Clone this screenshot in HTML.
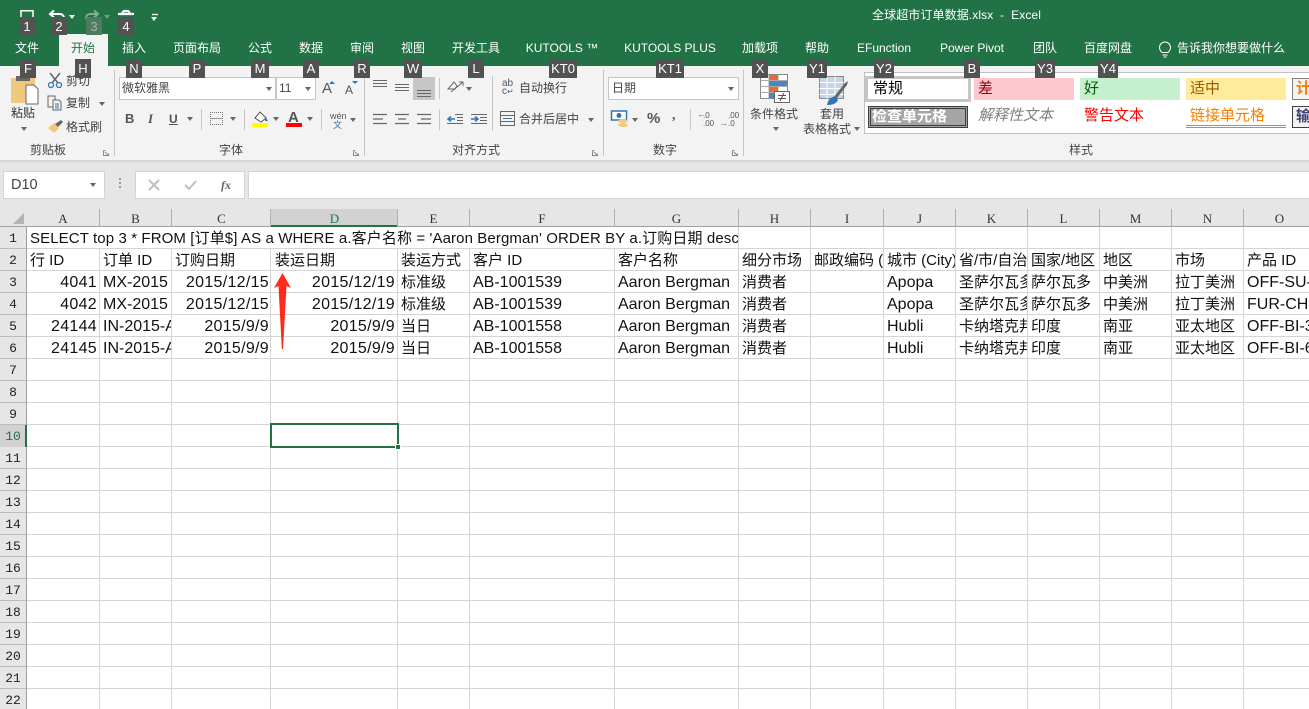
<!DOCTYPE html>
<html><head><meta charset="utf-8">
<style>
*{box-sizing:border-box}
html,body{margin:0;padding:0;width:1309px;height:709px;overflow:hidden;background:#fff}
body{position:relative;font-family:"Liberation Sans","Noto Sans CJK SC",sans-serif;color:#444}
.a{position:absolute;white-space:nowrap}
.t{position:absolute;white-space:nowrap;font-size:12px;line-height:16px}
.tab{position:absolute;top:40px;white-space:nowrap;font-size:12px;line-height:16px;color:#fff;transform:translateX(-50%)}
.k{position:absolute;background:#525252;color:#fff;font-size:13px;line-height:19px;height:19px;text-align:center;top:59px;z-index:5}
.sep{position:absolute;width:1px;background:#c6c6c6}
.c{position:absolute;height:21px;line-height:23px;font-size:15px;color:#111;white-space:nowrap;overflow:hidden;padding-left:3px}
.l{font-size:16px}
.r{text-align:right;padding:0 2px 0 0;font-size:16px;letter-spacing:.3px}
.ch{position:absolute;top:209px;height:17px;font:13px/20px "Liberation Serif",serif;text-align:center;color:#333}
.rh{position:absolute;left:0;width:26px;height:21px;text-align:center;font:13px/23px "Liberation Mono",monospace;color:#222}
.st{position:absolute;height:22px;line-height:22px;font-size:15px;padding-left:4px;white-space:nowrap;overflow:hidden}
.d{position:absolute;width:0;height:0;border-left:3.5px solid transparent;border-right:3.5px solid transparent;border-top:4px solid #666}
svg{position:absolute;overflow:visible}
</style></head><body>

<!-- title bar -->
<div class="a" style="left:0;top:0;width:1309px;height:66px;background:#217346"></div>
<div class="a" style="left:59px;top:34px;width:49px;height:32px;background:#f3f3f3"></div>
<div class="a" style="left:0;top:66px;width:1309px;height:95px;background:#f3f3f3"></div>
<div class="a" style="left:0;top:160px;width:1309px;height:49px;background:#e6e6e6;border-top:2px solid #d6d6d6"></div>

<!-- QAT -->
<svg style="left:18px;top:8px" width="150" height="18" fill="none" stroke="#fff" stroke-width="1.5">
<path d="M3 9V2.800h12V9"/>
<path d="M33 6h9a4 4 0 0 1 4 4M36 2.500L32 6l4 3.500" stroke-width="2"/>
<path d="M80 6h-8a4 4 0 0 0-4 4v1M76 2.500L80 6l-4 3.500" stroke="#7fae95" stroke-width="2"/>
<path d="M100 6h16M104 5l2-2h4l2 2" stroke-width="2.200"/>
<path d="M134 6.500h6" stroke-width="1.300"/>
</svg>
<div class="d" style="left:69px;top:15px;border-top-color:#fff"></div>
<div class="d" style="left:104px;top:15px;border-top-color:#6f9f85"></div>
<div class="d" style="left:151px;top:17px;border-top-color:#fff;border-left-width:3px;border-right-width:3px"></div>

<div class="t" style="left:872px;top:7px;color:#fff;letter-spacing:.1px">全球超市订单数据.xlsx&nbsp; -&nbsp; Excel</div>

<!-- tabs -->
<div class="tab" style="left:27px">文件</div>
<div class="tab" style="left:83px;color:#217346">开始</div>
<div class="tab" style="left:134px">插入</div>
<div class="tab" style="left:197px">页面布局</div>
<div class="tab" style="left:260px">公式</div>
<div class="tab" style="left:311px">数据</div>
<div class="tab" style="left:362px">审阅</div>
<div class="tab" style="left:413px">视图</div>
<div class="tab" style="left:476px">开发工具</div>
<div class="tab" style="left:562px">KUTOOLS ™</div>
<div class="tab" style="left:670px">KUTOOLS PLUS</div>
<div class="tab" style="left:760px">加载项</div>
<div class="tab" style="left:817px">帮助</div>
<div class="tab" style="left:884px">EFunction</div>
<div class="tab" style="left:972px">Power Pivot</div>
<div class="tab" style="left:1045px">团队</div>
<div class="tab" style="left:1108px">百度网盘</div>
<svg style="left:1158px;top:41px" width="14" height="18" fill="none" stroke="#fff" stroke-width="1"><path d="M4 11.500C2 9.500 1.500 8 1.500 6.500a5.500 5.500 0 0 1 11 0c0 1.500-.5 3-2.500 5zM4.500 14h5M5.500 16h3"/></svg>
<div class="tab" style="left:1177px;transform:none">告诉我你想要做什么</div>

<!-- key tips -->
<div class="k" style="left:19px;top:17px;width:16px;height:18px">1</div>
<div class="k" style="left:51px;top:17px;width:16px;height:18px">2</div>
<div class="k" style="left:86px;top:17px;width:16px;height:18px;background:#4d7a60;color:#9fb8a9">3</div>
<div class="k" style="left:118px;top:17px;width:16px;height:18px">4</div>
<div class="k" style="left:20px;width:16px">F</div>
<div class="k" style="left:75px;width:16px">H</div>
<div class="k" style="left:126px;width:16px">N</div>
<div class="k" style="left:189px;width:16px">P</div>
<div class="k" style="left:251px;width:18px">M</div>
<div class="k" style="left:303px;width:16px">A</div>
<div class="k" style="left:354px;width:16px">R</div>
<div class="k" style="left:404px;width:18px">W</div>
<div class="k" style="left:468px;width:16px">L</div>
<div class="k" style="left:549px;width:28px">KT0</div>
<div class="k" style="left:656px;width:28px">KT1</div>
<div class="k" style="left:752px;width:16px">X</div>
<div class="k" style="left:807px;width:20px">Y1</div>
<div class="k" style="left:874px;width:20px">Y2</div>
<div class="k" style="left:964px;width:16px">B</div>
<div class="k" style="left:1035px;width:20px">Y3</div>
<div class="k" style="left:1098px;width:20px">Y4</div>

<!-- clipboard -->
<svg style="left:10px;top:76px" width="30" height="30">
<path d="M1 2h24v25H1z" fill="#f0c97f"/><path d="M6 0h14v5H6z" fill="#666"/>
<path d="M16 9h8l4 4v15H16z" fill="#fff" stroke="#666"/>
</svg>
<div class="t" style="left:11px;top:105px;color:#333">粘贴</div>
<div class="d" style="left:21px;top:127px"></div>
<svg style="left:47px;top:72px" width="16" height="17" fill="none"><path d="M3 1l8 10M13 1L5 11" stroke="#666" stroke-width="1.500"/><circle cx="4" cy="13" r="2.500" stroke="#2e75b6" stroke-width="1.300"/><circle cx="12" cy="13" r="2.500" stroke="#2e75b6" stroke-width="1.300"/></svg>
<div class="t" style="left:66px;top:73px">剪切</div>
<svg style="left:47px;top:95px" width="16" height="16" fill="none" stroke="#666"><path d="M1 1h7v11H1z"/><path d="M6 5h6l2 2v8H6z" fill="#f3f3f3"/><path d="M8 9h4M8 11h4M8 13h4" stroke="#2e75b6"/></svg>
<div class="t" style="left:66px;top:95px">复制</div>
<div class="d" style="left:99px;top:102px"></div>
<svg style="left:47px;top:119px" width="17" height="15"><path d="M1 9l6-5 5 5-5 5z" fill="#f0c97f"/><path d="M8 5l6-4 2 2-5 5z" fill="#666"/></svg>
<div class="t" style="left:66px;top:119px">格式刷</div>
<div class="t" style="left:30px;top:142px;color:#444">剪贴板</div>
<div class="sep" style="left:114px;top:70px;height:86px"></div>

<!-- font -->
<div class="a" style="left:119px;top:77px;width:157px;height:23px;background:#fff;border:1px solid #c6c6c6;font-size:12px;line-height:21px;padding-left:2px;color:#444">微软雅黑</div>
<div class="d" style="left:266px;top:87px"></div>
<div class="a" style="left:276px;top:77px;width:40px;height:23px;background:#fff;border:1px solid #c6c6c6;font-size:12px;line-height:21px;padding-left:2px;color:#444">11</div>
<div class="d" style="left:305px;top:87px"></div>
<div class="a" style="left:322px;top:81px;font-size:15px;line-height:16px;color:#555">A</div>
<div class="a" style="left:345px;top:83px;font-size:12px;line-height:14px;color:#555">A</div>
<div class="d" style="left:329px;top:81px;border:0;border-left:3px solid transparent;border-right:3px solid transparent;border-bottom:3px solid #2e75b6"></div>
<div class="d" style="left:352px;top:81px;border-top:3px solid #2e75b6;border-left-width:3px;border-right-width:3px"></div>
<div class="a" style="left:125px;top:111px;font:bold 13px/16px 'Liberation Sans';color:#555">B</div>
<div class="a" style="left:148px;top:111px;font:italic bold 13px/16px 'Liberation Serif';color:#555">I</div>
<div class="a" style="left:169px;top:111px;font:bold 12px/16px 'Liberation Sans';color:#555;text-decoration:underline">U</div>
<div class="d" style="left:187px;top:117px"></div>
<div class="sep" style="left:201px;top:109px;height:21px"></div>
<div class="a" style="left:210px;top:112px;width:13px;height:13px;border:1px dotted #777;background:linear-gradient(#999,#999) 50% 50%/100% 1px no-repeat"></div>
<div class="d" style="left:230px;top:117px"></div>
<div class="sep" style="left:244px;top:109px;height:21px"></div>
<svg style="left:252px;top:110px" width="16" height="17"><path d="M3 8l5-6 6 6-5 4z" fill="#fff" stroke="#555"/><path d="M13 6l3 5h-3z" fill="#2e75b6"/><path d="M0 13h16v4H0z" fill="#ffff00"/></svg>
<div class="d" style="left:273px;top:117px"></div>
<div class="a" style="left:288px;top:110px;font:bold 15px/15px 'Liberation Sans';color:#555">A</div>
<div class="a" style="left:286px;top:123px;width:16px;height:4px;background:#f00"></div>
<div class="d" style="left:307px;top:117px"></div>
<div class="sep" style="left:321px;top:109px;height:21px"></div>
<div class="a" style="left:330px;top:111px;font-size:9px;line-height:10px;color:#555">wén</div>
<div class="a" style="left:333px;top:120px;font-size:9px;line-height:10px;color:#2e75b6">文</div>
<div class="d" style="left:350px;top:118px"></div>
<div class="t" style="left:219px;top:142px">字体</div>
<div class="sep" style="left:364px;top:70px;height:86px"></div>

<!-- align -->
<div class="a" style="left:413px;top:77px;width:22px;height:23px;background:#c6c6c6"></div>
<svg style="left:0;top:0" width="440" height="130" stroke="#666" fill="none">
<path d="M373 80.500h14M373 83.500h14M373 86.500h14M395 84.500h14M395 87.500h14M395 90.500h14M417 90.500h14M417 93.500h14M417 96.500h14"/>
<path d="M373 114.500h14M373 119h10M373 123.500h14M395 114.500h14M398 119h8M395 123.500h14M417 114.500h14M421 119h10M417 123.500h14" stroke-width="1.200"/></svg>
<div class="sep" style="left:439px;top:78px;height:21px"></div>
<div class="sep" style="left:439px;top:109px;height:21px"></div>
<svg style="left:447px;top:80px" width="18" height="16" fill="none" stroke="#666"><path d="M4 12L16 2M12 2h4v4"/><path d="M1 9l6-7 3 4-2 3z"/></svg>
<div class="d" style="left:466px;top:87px"></div>
<svg style="left:447px;top:114px" width="42" height="11" fill="none" stroke="#666"><path d="M8 .500h8M10 3.500h6M10 6.500h6M0 9.500h16M24 .500h16M33 3.500h7M33 6.500h7M24 9.500h16"/><path d="M8 5H1M4 2.500L1 5l3 2.500M24 5h7M28 2.500L31 5l-3 2.500" stroke="#2e75b6" stroke-width="1.500"/></svg>
<div class="sep" style="left:492px;top:76px;height:55px"></div>
<div class="a" style="left:502px;top:80px;font-size:10px;line-height:8px;color:#555;width:14px">ab<br>c<span style="color:#2e75b6;font-size:8px">↵</span></div>
<div class="t" style="left:519px;top:80px">自动换行</div>
<svg style="left:500px;top:111px" width="15" height="15" fill="none" stroke="#666"><path d="M.5.500h14v14H.5zM.5 4.500h14M.5 10.500h14"/><path d="M3 7.500h9" stroke="#2e75b6"/></svg>
<div class="t" style="left:519px;top:111px">合并后居中</div>
<div class="d" style="left:588px;top:118px"></div>
<div class="t" style="left:452px;top:142px">对齐方式</div>
<div class="sep" style="left:603px;top:70px;height:86px"></div>

<!-- number -->
<div class="a" style="left:608px;top:77px;width:131px;height:23px;background:#fff;border:1px solid #c6c6c6;font-size:12px;line-height:21px;padding-left:3px;color:#444">日期</div>
<div class="d" style="left:728px;top:87px"></div>
<svg style="left:611px;top:110px" width="18" height="18"><path d="M.5 1h15v9H.5z" fill="#fff" stroke="#2e75b6" stroke-width="1.500"/><circle cx="8" cy="5.500" r="2.500" fill="#2e75b6"/><ellipse cx="12" cy="11" rx="5" ry="2" fill="#f0c97f"/><ellipse cx="12" cy="15" rx="5" ry="2" fill="#f0c97f"/></svg>
<div class="d" style="left:632px;top:118px"></div>
<div class="a" style="left:647px;top:111px;font:bold 15px/16px 'Liberation Sans';color:#555">%</div>
<div class="a" style="left:672px;top:108px;font:bold 14px/16px 'Liberation Serif';color:#555">,</div>
<div class="sep" style="left:690px;top:109px;height:21px"></div>
<div class="a" style="left:703px;top:112px;font-size:8px;line-height:8px;color:#555">.0<br>.00</div>
<div class="a" style="left:728px;top:112px;font-size:8px;line-height:8px;color:#555">.00<br>.0</div>
<div class="a" style="left:697px;top:110px;font-size:9px;line-height:9px;color:#2e75b6">←</div>
<div class="a" style="left:719px;top:119px;font-size:9px;line-height:9px;color:#2e75b6">→</div>
<div class="t" style="left:653px;top:142px">数字</div>
<div class="sep" style="left:743px;top:70px;height:86px"></div>

<!-- cond format -->
<svg style="left:760px;top:74px" width="30" height="30">
<path d="M.5.500h27v24H.5z" fill="#fff" stroke="#888"/>
<path d="M9 .500v24M18 .500v24M.5 6.500h27M.5 12.500h27M.5 18.500h27" stroke="#aaa"/>
<path d="M9 1h9v5H9z" fill="#e46c3d"/><path d="M9 7h18v5H9z" fill="#4a86c0"/><path d="M9 13h9v5H9z" fill="#e46c3d"/><path d="M9 19h5v5H9z" fill="#4a86c0"/>
<path d="M14.500 17.500h15v11h-15z" fill="#fff" stroke="#666"/>
<path d="M18 21.500h8M18 24.500h8M24 19l-4 8" stroke="#555" fill="none"/>
</svg>
<div class="t" style="left:750px;top:106px;color:#444">条件格式</div>
<div class="d" style="left:773px;top:127px"></div>
<svg style="left:819px;top:76px" width="30" height="30">
<path d="M.5.500h24v22H.5z" fill="#c5d5e8" stroke="#888"/>
<path d="M8 .500v22M16 .500v22M.5 6.500h24M.5 12.500h24M.5 18.500h24" stroke="#fff"/>
<path d="M14 22l12-15 3-2-1 4-10 13z" fill="#666"/><path d="M8 29c1-6 5-9 9-8l2 3c-2 4-6 5-11 5z" fill="#2e75b6"/>
</svg>
<div class="t" style="left:820px;top:106px;color:#444">套用</div>
<div class="t" style="left:803px;top:121px;color:#444">表格格式</div>
<div class="d" style="left:854px;top:127px"></div>

<!-- styles -->
<div class="a" style="left:864px;top:72px;width:445px;height:62px;background:#fff;border:1px solid #c0c0c0;border-right:0"></div>
<div class="st" style="left:865px;top:76px;width:106px;height:26px;line-height:20px;border:3px solid #c6c6c6;color:#000;padding-left:5px;background:#fff">常规</div>
<div class="st" style="left:974px;top:78px;width:100px;background:#ffc7ce;color:#9c0006">差</div>
<div class="st" style="left:1080px;top:78px;width:100px;background:#c6efce;color:#006100">好</div>
<div class="st" style="left:1186px;top:78px;width:100px;background:#ffeb9c;color:#9c5700">适中</div>
<div class="st" style="left:1292px;top:78px;width:17px;background:#f2f2f2;color:#fa7d00;border:1px solid #7f7f7f;border-right:0;padding-left:3px;font-weight:bold;line-height:20px">计</div>
<div class="st" style="left:868px;top:106px;width:100px;background:#a5a5a5;color:#fff;font-weight:bold;border:3px double #3f3f3f;line-height:16px;padding-left:1px">检查单元格</div>
<div class="st" style="left:974px;top:105px;width:100px;color:#7f7f7f;font-style:italic">解释性文本</div>
<div class="st" style="left:1080px;top:105px;width:100px;color:#f00">警告文本</div>
<div class="st" style="left:1186px;top:105px;width:100px;height:23px;color:#fa7d00;border-bottom:3px double #fa7d00">链接单元格</div>
<div class="st" style="left:1292px;top:106px;width:17px;background:#f2f2f2;color:#3f3f76;border:1px solid #3f3f3f;border-right:0;padding-left:3px;line-height:20px;font-weight:bold">输</div>
<div class="t" style="left:1069px;top:142px">样式</div>

<!-- group launcher -->
<svg style="left:0;top:0" width="1309" height="160" fill="none" stroke="#888"><path d="M103.500 150.500h2M103.500 150.500v5h5v-2M105 152l3 3M353.500 150.500h2M353.500 150.500v5h5v-2M355 152l3 3M592.500 150.500h2M592.500 150.500v5h5v-2M594 152l3 3M732.500 150.500h2M732.500 150.500v5h5v-2M734 152l3 3"/></svg>

<!-- formula bar -->
<div class="a" style="left:3px;top:171px;width:102px;height:28px;background:#fff;border:1px solid #d4d4d4;font-size:14.5px;line-height:27px;padding-left:7px;color:#444">D10</div>
<div class="d" style="left:90px;top:183px"></div>
<div class="a" style="left:119px;top:178px;width:2px;height:2px;background:#999;box-shadow:0 4px #999,0 8px #999"></div>
<div class="a" style="left:135px;top:171px;width:110px;height:28px;background:#fff;border:1px solid #d4d4d4"></div>
<svg style="left:148px;top:179px" width="70" height="13" fill="none" stroke-width="2"><path d="M1 1l10 10M11 1L1 11" stroke="#c0c0c0"/><path d="M37 6l4 4 7-8" stroke="#c0c0c0"/></svg>
<div class="a" style="left:221px;top:177px;font:italic bold 12px/16px 'Liberation Serif';color:#666">fx</div>
<div class="a" style="left:248px;top:171px;width:1061px;height:28px;background:#fff;border:1px solid #d4d4d4;border-right:0"></div>

<!-- column header -->
<div class="a" style="left:0;top:209px;width:1309px;height:18px;background:#e6e6e6;border-bottom:1px solid #9f9f9f"></div>
<div class="a" style="left:0;top:227px;width:27px;height:482px;background:#e6e6e6;border-right:1px solid #9f9f9f"></div>
<svg style="left:13px;top:213px" width="11" height="11"><path d="M11 0v11H0z" fill="#b4b4b4"/></svg>
<div class="a" style="left:271px;top:209px;width:127px;height:18px;background:#d2d2d2;border-bottom:2px solid #217346"></div>
<div class="ch" style="left:27px;width:72px">A</div>
<div class="ch" style="left:100px;width:71px">B</div>
<div class="ch" style="left:172px;width:99px">C</div>
<div class="ch" style="left:271px;width:127px;color:#217346">D</div>
<div class="ch" style="left:398px;width:71px">E</div>
<div class="ch" style="left:470px;width:144px">F</div>
<div class="ch" style="left:615px;width:123px">G</div>
<div class="ch" style="left:739px;width:71px">H</div>
<div class="ch" style="left:811px;width:72px">I</div>
<div class="ch" style="left:884px;width:71px">J</div>
<div class="ch" style="left:956px;width:71px">K</div>
<div class="ch" style="left:1028px;width:71px">L</div>
<div class="ch" style="left:1100px;width:71px">M</div>
<div class="ch" style="left:1172px;width:71px">N</div>
<div class="ch" style="left:1244px;width:71px">O</div>
<svg style="left:99px;top:209px" width="1210" height="18" stroke="#b0b0b0"><path d="M.5 0v18M72.500 0v18M171.500 0v18M298.500 0v18M370.500 0v18M515.500 0v18M639.500 0v18M711.500 0v18M784.500 0v18M856.500 0v18M928.500 0v18M1000.500 0v18M1072.500 0v18M1144.500 0v18"/></svg>

<!-- grid -->
<div class="a" style="left:27px;top:227px;width:1282px;height:482px;background:repeating-linear-gradient(to bottom,transparent 0,transparent 21px,#d4d4d4 21px,#d4d4d4 22px)"></div>
<svg style="left:27px;top:227px" width="1282" height="482" stroke="#d4d4d4"><path d="M72.500 22v460M144.500 0v482M243.500 0v482M370.500 0v482M442.500 0v482M587.500 0v482M711.500 0v482M783.500 0v482M856.500 0v482M928.500 0v482M1000.500 0v482M1072.500 0v482M1144.500 0v482M1216.500 0v482"/></svg>
<div class="a" style="left:27px;top:227px;width:711px;height:21px;background:#fff"></div>

<!-- row numbers -->
<svg style="left:0;top:227px" width="27" height="482" stroke="#bcbcbc"><path d="M0 21.500h26M0 43.500h26M0 65.500h26M0 87.500h26M0 109.500h26M0 131.500h26M0 153.500h26M0 175.500h26M0 197.500h26M0 219.500h26M0 241.500h26M0 263.500h26M0 285.500h26M0 307.500h26M0 329.500h26M0 351.500h26M0 373.500h26M0 395.500h26M0 417.500h26M0 439.500h26M0 461.500h26"/></svg>
<div class="a" style="left:0;top:425px;width:26px;height:22px;background:#d2d2d2"></div>
<div class="a" style="left:25px;top:425px;width:2px;height:22px;background:#217346"></div>
<div class="rh" style="top:227px">1</div><div class="rh" style="top:249px">2</div><div class="rh" style="top:271px">3</div><div class="rh" style="top:293px">4</div><div class="rh" style="top:315px">5</div><div class="rh" style="top:337px">6</div><div class="rh" style="top:359px">7</div><div class="rh" style="top:381px">8</div><div class="rh" style="top:403px">9</div><div class="rh" style="top:425px;color:#217346">10</div><div class="rh" style="top:447px">11</div><div class="rh" style="top:469px">12</div><div class="rh" style="top:491px">13</div><div class="rh" style="top:513px">14</div><div class="rh" style="top:535px">15</div><div class="rh" style="top:557px">16</div><div class="rh" style="top:579px">17</div><div class="rh" style="top:601px">18</div><div class="rh" style="top:623px">19</div><div class="rh" style="top:645px">20</div><div class="rh" style="top:667px">21</div><div class="rh" style="top:689px">22</div>

<!-- row 1 -->
<div class="c" style="left:27px;top:227px;width:711px;letter-spacing:.11px">SELECT top 3 * FROM [订单$] AS a WHERE a.客户名称 = 'Aaron Bergman' ORDER BY a.订购日期 desc</div>

<!-- row 2 -->
<div class="c" style="left:27px;top:249px;width:72px">行 ID</div>
<div class="c" style="left:100px;top:249px;width:71px">订单 ID</div>
<div class="c" style="left:172px;top:249px;width:99px">订购日期</div>
<div class="c" style="left:272px;top:249px;width:125px">装运日期</div>
<div class="c" style="left:398px;top:249px;width:71px">装运方式</div>
<div class="c" style="left:470px;top:249px;width:144px">客户 ID</div>
<div class="c" style="left:615px;top:249px;width:123px">客户名称</div>
<div class="c" style="left:739px;top:249px;width:71px">细分市场</div>
<div class="c" style="left:811px;top:249px;width:72px">邮政编码 (</div>
<div class="c" style="left:884px;top:249px;width:71px">城市 (City)</div>
<div class="c" style="left:956px;top:249px;width:71px">省/市/自治区</div>
<div class="c" style="left:1028px;top:249px;width:71px">国家/地区</div>
<div class="c" style="left:1100px;top:249px;width:71px">地区</div>
<div class="c" style="left:1172px;top:249px;width:71px">市场</div>
<div class="c" style="left:1244px;top:249px;width:65px">产品 ID</div>

<!-- row 3 -->
<div class="c r" style="left:27px;top:271px;width:72px">4041</div>
<div class="c l" style="left:100px;top:271px;width:71px">MX-2015</div>
<div class="c r" style="left:172px;top:271px;width:99px">2015/12/15</div>
<div class="c r" style="left:272px;top:271px;width:125px">2015/12/19</div>
<div class="c" style="left:398px;top:271px;width:71px">标准级</div>
<div class="c l" style="left:470px;top:271px;width:144px">AB-1001539</div>
<div class="c l" style="left:615px;top:271px;width:123px">Aaron Bergman</div>
<div class="c" style="left:739px;top:271px;width:71px">消费者</div>
<div class="c l" style="left:884px;top:271px;width:71px">Apopa</div>
<div class="c" style="left:956px;top:271px;width:71px">圣萨尔瓦多</div>
<div class="c" style="left:1028px;top:271px;width:71px">萨尔瓦多</div>
<div class="c" style="left:1100px;top:271px;width:71px">中美洲</div>
<div class="c" style="left:1172px;top:271px;width:71px">拉丁美洲</div>
<div class="c l" style="left:1244px;top:271px;width:65px">OFF-SU-2</div>

<!-- row 4 -->
<div class="c r" style="left:27px;top:293px;width:72px">4042</div>
<div class="c l" style="left:100px;top:293px;width:71px">MX-2015</div>
<div class="c r" style="left:172px;top:293px;width:99px">2015/12/15</div>
<div class="c r" style="left:272px;top:293px;width:125px">2015/12/19</div>
<div class="c" style="left:398px;top:293px;width:71px">标准级</div>
<div class="c l" style="left:470px;top:293px;width:144px">AB-1001539</div>
<div class="c l" style="left:615px;top:293px;width:123px">Aaron Bergman</div>
<div class="c" style="left:739px;top:293px;width:71px">消费者</div>
<div class="c l" style="left:884px;top:293px;width:71px">Apopa</div>
<div class="c" style="left:956px;top:293px;width:71px">圣萨尔瓦多</div>
<div class="c" style="left:1028px;top:293px;width:71px">萨尔瓦多</div>
<div class="c" style="left:1100px;top:293px;width:71px">中美洲</div>
<div class="c" style="left:1172px;top:293px;width:71px">拉丁美洲</div>
<div class="c l" style="left:1244px;top:293px;width:65px">FUR-CH-1</div>

<!-- row 5 -->
<div class="c r" style="left:27px;top:315px;width:72px">24144</div>
<div class="c l" style="left:100px;top:315px;width:71px">IN-2015-AB</div>
<div class="c r" style="left:172px;top:315px;width:99px">2015/9/9</div>
<div class="c r" style="left:272px;top:315px;width:125px">2015/9/9</div>
<div class="c" style="left:398px;top:315px;width:71px">当日</div>
<div class="c l" style="left:470px;top:315px;width:144px">AB-1001558</div>
<div class="c l" style="left:615px;top:315px;width:123px">Aaron Bergman</div>
<div class="c" style="left:739px;top:315px;width:71px">消费者</div>
<div class="c l" style="left:884px;top:315px;width:71px">Hubli</div>
<div class="c" style="left:956px;top:315px;width:71px">卡纳塔克邦</div>
<div class="c" style="left:1028px;top:315px;width:71px">印度</div>
<div class="c" style="left:1100px;top:315px;width:71px">南亚</div>
<div class="c" style="left:1172px;top:315px;width:71px">亚太地区</div>
<div class="c l" style="left:1244px;top:315px;width:65px">OFF-BI-3</div>

<!-- row 6 -->
<div class="c r" style="left:27px;top:337px;width:72px">24145</div>
<div class="c l" style="left:100px;top:337px;width:71px">IN-2015-AB</div>
<div class="c r" style="left:172px;top:337px;width:99px">2015/9/9</div>
<div class="c r" style="left:272px;top:337px;width:125px">2015/9/9</div>
<div class="c" style="left:398px;top:337px;width:71px">当日</div>
<div class="c l" style="left:470px;top:337px;width:144px">AB-1001558</div>
<div class="c l" style="left:615px;top:337px;width:123px">Aaron Bergman</div>
<div class="c" style="left:739px;top:337px;width:71px">消费者</div>
<div class="c l" style="left:884px;top:337px;width:71px">Hubli</div>
<div class="c" style="left:956px;top:337px;width:71px">卡纳塔克邦</div>
<div class="c" style="left:1028px;top:337px;width:71px">印度</div>
<div class="c" style="left:1100px;top:337px;width:71px">南亚</div>
<div class="c" style="left:1172px;top:337px;width:71px">亚太地区</div>
<div class="c l" style="left:1244px;top:337px;width:65px">OFF-BI-6</div>

<!-- selection -->
<div class="a" style="left:270px;top:423px;width:129px;height:25px;border:2px solid #217346"></div>
<div class="a" style="left:395px;top:444px;background:#217346;border:1px solid #fff;box-sizing:content-box;width:4px;height:4px"></div>

<!-- arrow -->
<svg style="left:274px;top:273px" width="18" height="78"><path d="M8.500 0L17 15 12.500 13 9 76H7.800L4.500 13 0 15z" fill="#ff2a1a"/></svg>

</body></html>
